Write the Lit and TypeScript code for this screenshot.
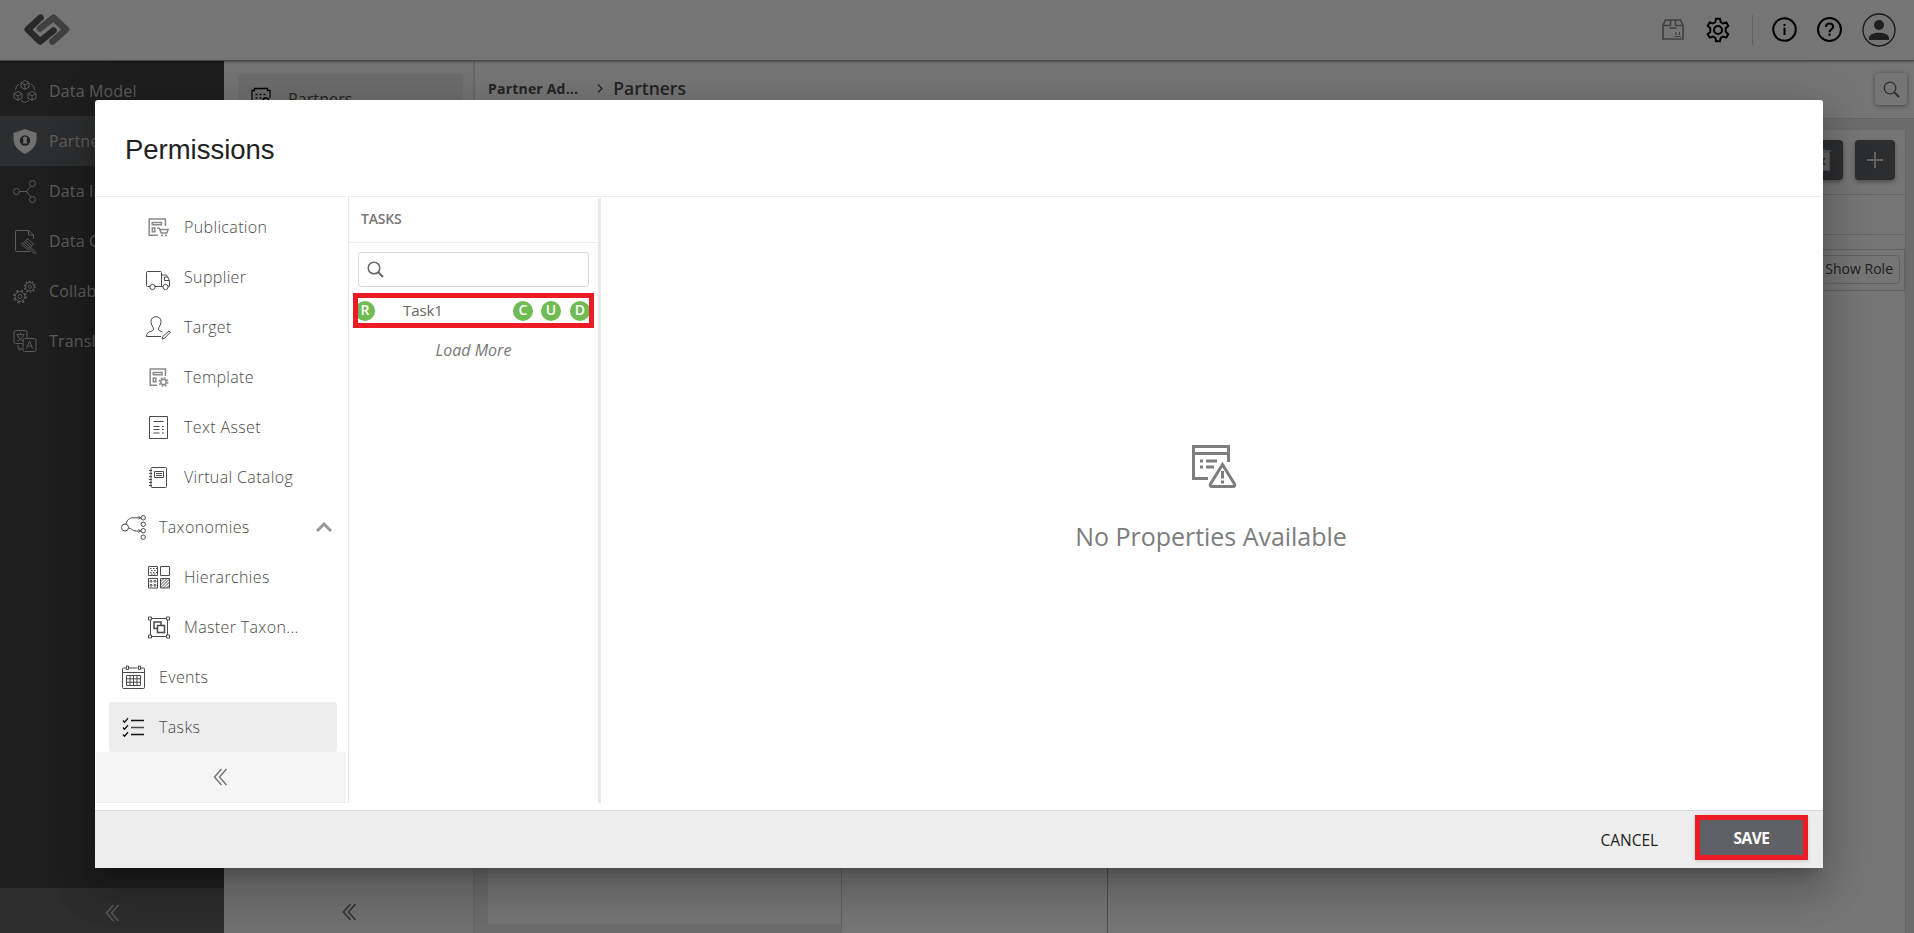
import { LitElement, html, svg, css } from "lit";
import { customElement, property } from "lit/decorators.js";
import { classMap } from "lit/directives/class-map.js";

const glyphs: Record<string, unknown> = {
  cubes: svg`<path d="M13 2.500l4 2v4.600l-4 2.200-4-2.200V4.500zM9 4.600l4 2.200 4-2.200M13 6.800v4.400M6 13.500l4 2v4.600l-4 2.200-4-2.200v-4.600zM2 15.600l4 2.200 4-2.200M6 17.800v4.400M20 13.500l4 2v4.600l-4 2.200-4-2.200v-4.600zM16 15.600l4 2.200 4-2.200M20 17.800v4.400M7 6Q3.500 8 3.500 12M19 6q3.500 2 3.500 6M9 22.500l4 2 4-2"/>`,
  shield: svg`<path class="solid" d="M13 1L24.500 5v6.500c0 6-4.500 11-11.500 14.500C6 22.500 1.500 17.500 1.500 11.500V5z"/><circle class="hole" cx="13" cy="12.500" r="5.200"/><path class="solid" d="M13 8.500a2 2 0 0 1 2 2.200l-.6 2.300 1 2.500h-4.800l1-2.500-.6-2.300a2 2 0 0 1 2-2.200z"/>`,
  network: svg`<circle cx="4.500" cy="13.500" r="3"/><circle cx="20.500" cy="5.500" r="3"/><circle cx="20.500" cy="21.500" r="3"/><path d="M7.500 13.500h7l4.300-5.500M14.500 13.500l4.300 5.500"/>`,
  gavel: svg`<path d="M21.500 11V7L17 2.500H4.500a1 1 0 0 0-1 1v19a1 1 0 0 0 1 1H18M16.500 2.500V7h5M15.500 10.500l6 5.500-1.700 1.800-6-5.500zM12.500 13.800l6 5.500M14 12.500l-2.200 2.300M19.700 17.800l-2 2.200M10.500 14.800l6.500 5.800-1.200 1.200-6.500-5.800zM18 19l6 5.500-1.200 1.500-6.500-6"/>`,
  gears: svg`<circle cx="8" cy="18.500" r="4.800"/><circle cx="8" cy="18.500" r="2"/><circle class="teeth" cx="8" cy="18.500" r="6.100"/><circle cx="17.800" cy="8.700" r="4.100"/><circle cx="17.800" cy="8.700" r="1.600"/><circle class="teeth small" cx="17.800" cy="8.700" r="5.300"/>`,
  translate: svg`<path d="M15 9.500V4a1.500 1.500 0 0 0-1.500-1.500H3.500A1.500 1.500 0 0 0 2 4v10a1.500 1.500 0 0 0 1.500 1.500H10M4.500 6.500h8M8.500 4.500v2M5.500 7c1 3 3 5 6 6M11.500 7c-1 3-3 5-6.500 6M6 17v4h3M8 19.500L9.500 21 8 22.500M12.500 10.500h10A1.500 1.500 0 0 1 24 12v10a1.500 1.500 0 0 1-1.500 1.500h-10A1.500 1.500 0 0 1 11 22V12a1.500 1.500 0 0 1 1.500-1.500zM14.500 20.500l3-7.500 3 7.500M15.500 18h4"/>`,
  publication: svg`<g class="soft"><path d="M13 21.300H4.200V5h16.200v7"/><path d="M7.300 8.500h9.200v2.200H7.300zM7.300 14h2.500v3.800H7.300zM12 14.200h2.300l1.900 4.900h5.600l1.300-3.600H15"/></g><circle class="pale" cx="17" cy="21.500" r="1.100"/><circle class="pale" cx="21" cy="21.500" r="1.100"/>`,
  truck: svg`<path d="M5 22.500H2.500a1 1 0 0 1-1-1V8.500a1 1 0 0 1 1-1h13a1 1 0 0 1 1 1v14H10M16.500 11h4c1 0 1.600.5 2 1.400l2 4.600v5.500H23M16.500 22.500H18M24.500 16.500H19.500V13h3"/><circle cx="7.500" cy="23" r="2.600"/><circle cx="20.500" cy="23" r="2.600"/>`,
  target: svg`<path d="M16 22.500H1.500c0-3 1.500-4.300 4-5 2-.6 3-1 3-2.500 0-2-2.500-3.500-2.500-7.500 0-3 2-4.800 5-4.800s5 1.800 5 4.800c0 4-2.500 5.500-2.500 7.500 0 1.500 1 2 4 3M24 17l1.500 1.200-6 6-2.500.8.800-2.500z"/>`,
  template: svg`<g class="soft"><path d="M12 21.300H5.200V5h15.300v7"/><path d="M8.300 8.500h8.700v2.200H8.300zM8.300 14h2.500v3.800H8.300z"/><circle cx="18.500" cy="18" r="2.700"/></g><circle class="teeth small faded" cx="18.500" cy="18" r="4.200"/>`,
  textasset: svg`<path d="M4.500 2.500h18v22h-18zM8.500 7.500h10M8.500 12.500h6M8.500 15.500h6M8.500 19h6M17 12.500h1.800M17 15.500h1.800M17 19h1.800" />`,
  catalog: svg`<path d="M7 3.500h13.500a1 1 0 0 1 1 1v18a1 1 0 0 1-1 1H7a1 1 0 0 1-1-1v-18a1 1 0 0 1 1-1zM9.500 7.500h9v6h-9zM11 9.500h6M11 11.500h6M4 6.500h3M4 9.500h3M4 12.500h3M4 15.500h3M4 18.500h3M4 21.500h3"/>`,
  taxonomy: svg`<circle cx="5" cy="13.500" r="3.500"/><circle cx="23.200" cy="3.800" r="2.200"/><circle cx="23.200" cy="10.300" r="2.200"/><circle cx="23.200" cy="16.700" r="2.200"/><circle cx="23.200" cy="23.200" r="2.200"/><path d="M6 10.300C7 5.500 9.500 3.800 13 3.800h7.500M8.500 14c4 .5 3 3 8 3h4M18.500 2.300l2.200 1.500-2.200 1.500M18.500 15.400l2.200 1.500-2.200 1.500"/>`,
  hierarchy: svg`<path d="M3.500 2.500h9v9h-9zM15.500 2.500h9v9h-9zM3.500 14.500h9v9.500h-9zM15.500 14.500h9v9.500h-9zM15.500 18l3.500-3.500M15.500 21l6.500-6.500M15.500 24l9-9M18.500 24l6-6M21.500 24l3-3"/><path class="dots" d="M5 4.500h7M6 6.500h6M5 8.500h7M6 10h6"/><circle cx="6" cy="17.300" r="1"/><circle cx="10" cy="17.300" r="1"/><circle cx="6" cy="21.300" r="1"/><circle cx="10" cy="21.300" r="1"/>`,
  master: svg`<path d="M5.500 4.500h17v18h-17z"/><path class="box" d="M3.500 3h3v3h-3zM21.500 3h3v3h-3zM3.500 21h3v3h-3zM21.500 21h3v3h-3z"/><path class="w15" d="M12.500 14.500H9V8h7v3.500M12.500 11.500h7v7h-7z"/>`,
  calendar: svg`<path d="M6 4H3.500a1 1 0 0 0-1 1v18.500a1 1 0 0 0 1 1h20a1 1 0 0 0 1-1V5a1 1 0 0 0-1-1H21M9 4h8.500M2.500 8.500h22M6.500 2h2v3.500h-2zM18.500 2h2v3.500h-2zM6.500 11.500h14v10h-14zM10 11.500v10M13.500 11.500v10M17 11.500v10M6.500 14.800h14M6.500 18.200h14"/>`,
  tasks: svg`<path class="ink" d="M3 6.500l1.500 1.800L8 4.300M3 13.500l1.500 1.800L8 11.300M3 20.500l1.500 1.800L8 18.300M11 6.500h13M11 20.500h13"/><path class="w15" d="M11 13.500h13"/>`,
  building: svg`<path class="ink" d="M3 26V4.500h2.500v-2h13v2H21V12"/><path class="ink dots" d="M6.500 8.500h11.500M6.500 12h11.500M6.500 15.500h8"/><circle class="ink" cx="17" cy="15" r="3"/>`,
};

@customElement("ui-glyph")
class UiGlyph extends LitElement {
  @property() name = "";
  static styles = css`
    :host { display: block; width: 26px; height: 26px; flex: none; }
    svg { display: block; width: 26px; height: 26px; fill: none; stroke: currentColor; stroke-width: 1; overflow: visible; }
    .solid { fill: currentColor; stroke: none; }
    .hole { fill: #47484a; stroke: none; }
    .teeth { stroke-width: 1.600; stroke-dasharray: 2.400 2.390; }
    .teeth.small { stroke-width: 1.500; stroke-dasharray: 1.700 1.600; }
    .w15 { stroke-width: 1.500; }
    .soft { stroke: #8a8a8a; stroke-width: 1.500; }
    .faded { stroke: #8a8a8a; }
    .pale { fill: #8a8a8a; stroke: none; }
    .dots { stroke-dasharray: 1.500 1.500; }
    .box { fill: #fff; }
    .ink { stroke: #111; stroke-width: 1.300; }
    .dots.ink { stroke-dasharray: 2 2; }
  `;
  render() {
    return html`<svg viewBox="0 0 26 26">${glyphs[this.name]}</svg>`;
  }
}

const chevrons = html`<svg class="chevrons" viewBox="0 0 15 18"><path d="M8.500 1L1.500 9l7 8M13.500 1l-7 8 7 8" /></svg>`;
const lens = html`<svg class="lens" viewBox="0 0 17 17"><circle cx="7" cy="7" r="5.800" /><path class="handle" d="M11.300 11.300l4.700 4.700" /></svg>`;

@customElement("app-root")
class AppRoot extends LitElement {
  static styles = css`
    :host { display: block; width: 1914px; height: 933px; overflow: hidden; position: relative; font-family: "Open Sans", "Noto Sans", sans-serif; color: #444; background: #fff; }
    * { box-sizing: border-box; }
    svg { display: block; fill: none; stroke: currentColor; flex: none; }
    .page { display: flex; flex-direction: column; height: 933px; }
    .topbar { height: 61px; flex: none; border-bottom: 1px solid #a0a0a0; box-shadow: 0 1px 2px rgba(0,0,0,.35); display: flex; align-items: center; padding: 0 18px 1px 24px; z-index: 1; color: #000; }
    .logo { width: 46px; height: 32px; margin-right: auto; stroke-linejoin: round; stroke-linecap: round; stroke-width: 6.600; }
    .logo .a { stroke: #595959; } .logo .b { stroke: #8a8a8a; }
    .package { width: 22px; height: 21px; stroke: #8a8a8a; stroke-width: 1.700; }
    .gear { width: 26px; height: 26px; stroke-width: 2; margin-left: 21px; }
    .rule { width: 1px; height: 30px; background: #cfcfcf; margin: 0 19px 0 21px; }
    .round { width: 25px; height: 25px; stroke-width: 2; margin-right: 20px; }
    .avatar { width: 34px; height: 34px; stroke: #333; stroke-width: 1.300; }
    .avatar .fill { fill: #444; stroke: none; }
    .body { display: flex; flex: 1; min-height: 0; }
    .menu { width: 224px; background: #434343; color: #c4c4c4; display: flex; flex-direction: column; padding-top: 5px; }
    .menu-item { height: 50px; display: flex; align-items: center; padding-left: 12px; gap: 11px; font-size: 16px; letter-spacing: .15px; white-space: nowrap; }
    .menu-item.on { background: #636466; color: #cacaca; }
    .menu-item.on ui-glyph { color: #f5f5f5; }
    .fold { margin-top: auto; display: flex; align-items: center; justify-content: center; }
    .menu .fold { height: 45px; background: #636363; color: #bcbcbc; padding-top: 4px; }
    .chevrons { width: 15px; height: 18px; stroke-width: 1.500; }
    .sub { width: 249px; background: #fbfbfb; display: flex; flex-direction: column; padding: 13px 0 0; }
    .sub-item { margin: 0 10px 0 14px; height: 50px; border-radius: 3px; background: #ebebeb; display: flex; align-items: center; padding-left: 11px; gap: 13px; font-size: 16px; letter-spacing: .1px; color: #4d4d4d; }
    .sub .fold { height: 45px; background: #f5f5f5; color: #666; padding: 3px 0 0 1px; }
    .main { flex: 1; background: #ebebeb; border-left: 2px solid #e2e2e2; display: flex; flex-direction: column; min-width: 0; }
    .crumbs { height: 58px; flex: none; background: #fefefe; border-bottom: 1px solid #dcdcdc; display: flex; align-items: center; padding: 0 7px 3px 13px; color: #4f5054; font-weight: 700; font-size: 14px; letter-spacing: .2px; }
    .crumb-next { width: 6px; height: 9px; stroke-width: 1.300; margin: 0 10px 0 19px; }
    .current { font-size: 17.500px; letter-spacing: 0; margin-right: auto; font-weight: 600; }
    .find { width: 32px; height: 32px; border-radius: 3px; box-shadow: 0 1px 4px rgba(0,0,0,.4); display: flex; align-items: center; justify-content: center; color: #666; margin-top: 2px; }
    .lens { width: 17px; height: 17px; stroke-width: 1.300; }
    .lens .handle { stroke-width: 2; }
    .sheet { margin: 11px 8px 0 13px; flex: 1; background: #fff; display: flex; flex-direction: column; min-height: 0; border-right: 1px solid #dedede; }
    .actions { height: 65px; border-bottom: 1px solid #dcdcdc; display: flex; justify-content: flex-end; gap: 12px; padding: 10px 10px 0 0; }
    .action { width: 40px; height: 40px; border-radius: 4px; background: #606266; color: #d8d8d8; display: flex; align-items: center; justify-content: center; box-shadow: 0 2px 4px rgba(0,0,0,.35); }
    .action svg { width: 16px; height: 16px; stroke-width: 2; }
    .action .bin { width: 18px; height: 22px; stroke-width: 1.500; margin-left: -2px; }
    .action .bin .lid { fill: currentColor; }
    .action .bin .cross { stroke: #606266; }
    .band { height: 40px; border-bottom: 1px solid #dcdcdc; }
    .filter { margin-top: 14px; height: 42px; border: 1px solid #d6d6d6; display: flex; justify-content: flex-end; align-items: center; padding: 0 4px 1px 0; }
    .chip { height: 29px; border: 1px solid #d6d6d6; border-radius: 4px; padding: 0 6px; font-size: 14px; line-height: 26px; color: #444; }
    .grid { flex: 1; display: flex; }
    .tree { width: 354px; border-right: 1px solid #cfcfcf; border-bottom: 9px solid #ebebeb; }
    .mid { width: 266px; border-right: 1px solid #aaa; }
    .veil { position: absolute; inset: 0; background: rgba(0,0,0,.54); display: flex; z-index: 2; }
    .dialog { margin: 100px 0 0 95px; width: 1728px; height: 768px; background: #fff; border-radius: 3px 3px 0 0; display: flex; flex-direction: column; box-shadow: 0 11px 15px -7px rgba(0,0,0,.2), 0 24px 38px 3px rgba(0,0,0,.14), 0 9px 46px 8px rgba(0,0,0,.12); }
    .title { height: 96px; margin: 0; padding: 33px 0 0 30px; font: 400 27.500px/34px "Liberation Sans", Arial, sans-serif; letter-spacing: -.02px; color: #222; }
    .panes { flex: 1; display: flex; padding: 0 2px 7px 1px; min-height: 0; }
    .nav { width: 250px; margin-right: 2px; border-top: 1px solid #ebebeb; border-bottom: 1px solid #ebebeb; display: flex; flex-direction: column; justify-content: flex-end; }
    .nav-item { height: 50px; margin: 0 9px 0 13px; border-radius: 3px; display: flex; align-items: center; padding-left: 11px; gap: 13px; font-size: 16px; letter-spacing: .36px; font-weight: 300; color: #4a4a4a; white-space: nowrap; }
    .nav-item.child { padding-left: 36px; }
    .nav-item.on { background: #ededed; }
    .up { width: 16px; height: 10px; stroke: #999; stroke-width: 3; margin: 0 5px 0 auto; }
    .nav .fold { height: 50px; margin: 0; background: #f5f5f5; color: #777; padding-right: 1px; }
    .list { width: 250px; border-left: 1px solid #e6e6e6; border-top: 1px solid #ebebeb; display: flex; flex-direction: column; }
    .list-head { height: 46px; border-bottom: 1px solid #ebebeb; padding-left: 12px; font-size: 14px; letter-spacing: -.2px; line-height: 44px; color: #777; font-weight: 600; }
    .search { margin: 9px 9px 0; height: 35px; border: 1px solid #d9d9d9; border-radius: 3px; display: flex; align-items: center; padding-left: 8px; color: #666; }
    .search .lens { stroke-width: 1.500; }
    .hit { margin: 6px 4px 0; height: 35px; border: 5px solid #ed1c24; display: flex; align-items: center; overflow: hidden; font-size: 14px; color: #666; }
    .name { margin: 0 auto 0 28px; padding-bottom: 2px; font-size: 15px; letter-spacing: -.1px; }
    .badge { width: 20px; height: 20px; flex: none; border-radius: 50%; background: #70bb53; color: #fff; font-size: 14px; font-weight: 600; line-height: 18px; text-align: center; margin-left: 8px; }
    .badge.first { margin-left: -3px; }
    .badge.last { margin: 0 -1px 0 9px; }
    .more { margin-top: 11px; text-align: center; font-size: 16px; line-height: 22px; font-style: italic; color: #777; }
    .detail { flex: 1; border-top: 1px solid #ebebeb; display: flex; }
    .split { width: 3px; background: #e9e9e9; margin-top: 1px; }
    .empty { flex: 1; display: flex; flex-direction: column; align-items: center; padding-top: 247px; font-size: 25px; letter-spacing: -.03px; color: #7d7d7d; }
    .empty svg { width: 46px; height: 46px; stroke-width: 3; margin: 0 0 30px 6px; }
    .empty span { line-height: 32px; }
    .foot { height: 58px; background: #ededed; border-top: 1px solid #d9d9d9; display: flex; justify-content: flex-end; padding: 4px 15px 0 0; color: #222; font-size: 15px; }
    .cancel { font-size: 15.500px; line-height: 51px; margin-right: 37px; letter-spacing: -.05px; }
    .save { width: 113px; height: 45px; border: 5px solid #ed1c24; background: #5f6166; color: #fff; font-weight: 700; font-size: 15.500px; letter-spacing: -.5px; text-align: center; line-height: 37px; box-shadow: 0 1px 4px rgba(0,0,0,.15); }
  `;

  menu: [string, string, boolean?][] = [
    ["cubes", "Data Model"], ["shield", "Partner Admin", true], ["network", "Data Integration"],
    ["gavel", "Data Governance"], ["gears", "Collaboration"], ["translate", "Translations"],
  ];
  nav: [string, string, string?][] = [
    ["publication", "Publication", "child"], ["truck", "Supplier", "child"], ["target", "Target", "child"],
    ["template", "Template", "child"], ["textasset", "Text Asset", "child"], ["catalog", "Virtual Catalog", "child"],
    ["taxonomy", "Taxonomies", "open"], ["hierarchy", "Hierarchies", "child"], ["master", "Master Taxon...", "child"],
    ["calendar", "Events"], ["tasks", "Tasks", "on"],
  ];

  render() {
    return html`
      <div class="page">
        <header class="topbar">
          <svg class="logo" viewBox="0 0 46 32"><path class="b" d="M28.500 27.500l13.500-12L29.500 3.800 16 14.500"/><path class="a" d="M16.500 3.700L3.800 15.500 16 27.300l13.500-10.800"/></svg>
          <svg class="package" viewBox="0 0 22 21"><path d="M1 6.500V20h20V6.500L18.500 1h-15zM1 6.500h7.500M13.500 6.500H21M8.500 1v5.500M13.500 1v5.500M7.500 9h7"/><path d="M14 13v3M17.500 13v3M12.500 17.500h6.500" stroke-width="1.200"/></svg>
          <svg class="gear" viewBox="0 0 26 26"><circle cx="13" cy="13" r="4"/><path d="M11 1.800h4l.7 3.400 2.300 1.300 3.300-1.100 2 3.400-2.600 2.400v3.600l2.600 2.400-2 3.400-3.300-1.100-2.300 1.300-.7 3.400h-4l-.7-3.400L8 19.500l-3.300 1.100-2-3.400 2.600-2.400v-3.600L2.700 8.800l2-3.400L8 6.500l2.300-1.300z"/></svg>
          <span class="rule"></span>
          <svg class="round" viewBox="0 0 25 25"><circle cx="12.500" cy="12.500" r="11.300"/><path d="M12.500 10.500V18M12.500 7v2"/></svg>
          <svg class="round" viewBox="0 0 25 25"><circle cx="12.500" cy="12.500" r="11.500"/><path d="M9 10c0-4.600 7-4.600 7 0 0 2.300-3.500 2.500-3.500 5.300M12.500 16.500v2.200"/></svg>
          <svg class="avatar" viewBox="0 0 34 34"><circle cx="17" cy="17" r="16"/><circle class="fill" cx="17" cy="12" r="5"/><path class="fill" d="M7 27v-2c0-7 20-7 20 0v2z"/></svg>
        </header>
        <div class="body">
          <nav class="menu">
            ${this.menu.map(([g, t, on]) => html`<div class=${classMap({ "menu-item": true, on: !!on })}><ui-glyph name=${g}></ui-glyph><span>${t}</span></div>`)}
            <div class="fold">${chevrons}</div>
          </nav>
          <aside class="sub">
            <div class="sub-item"><ui-glyph name="building"></ui-glyph><span>Partners</span></div>
            <div class="fold">${chevrons}</div>
          </aside>
          <main class="main">
            <div class="crumbs">
              <span>Partner Ad...</span>
              <svg class="crumb-next" viewBox="0 0 6 9"><path d="M1 .5l4 4-4 4"/></svg>
              <span class="current">Partners</span>
              <span class="find">${lens}</span>
            </div>
            <section class="sheet">
              <div class="actions">
                <span class="action"><svg class="bin" viewBox="0 0 18 22"><path class="lid" d="M2 4h14v17H2zM0 2h18M6 0h6"/><path class="cross" d="M6 9l6 7M12 9l-6 7"/></svg></span>
                <span class="action"><svg viewBox="0 0 16 16"><path d="M8 0v16M0 8h16"/></svg></span>
              </div>
              <div class="band"></div>
              <div class="filter"><span class="chip">Show Role</span></div>
              <div class="grid"><div class="tree"></div><div class="mid"></div></div>
            </section>
          </main>
        </div>
      </div>
      <div class="veil">
        <section class="dialog">
          <h1 class="title">Permissions</h1>
          <div class="panes">
            <nav class="nav">
              ${this.nav.map(([g, t, k]) => html`<div class=${classMap({ "nav-item": true, child: k === "child", on: k === "on" })}>
                <ui-glyph name=${g}></ui-glyph><span>${t}</span>
                ${k === "open" ? html`<svg class="up" viewBox="0 0 16 10"><path d="M1 9l7-7 7 7"/></svg>` : ""}</div>`)}
              <div class="fold">${chevrons}</div>
            </nav>
            <section class="list">
              <div class="list-head">TASKS</div>
              <div class="search">${lens}</div>
              <div class="hit"><span class="badge first">R</span><span class="name">Task1</span><span class="badge">C</span><span class="badge">U</span><span class="badge last">D</span></div>
              <div class="more">Load More</div>
            </section>
            <section class="detail">
              <div class="split"></div>
              <div class="empty">
                <svg viewBox="0 0 46 46"><path d="M17 34.500H2.500V2.500h35V18M2.500 9.500h35M9 17h3M9 23h3M15 17h11M15 23h8"/><path d="M31.500 20.500L19.500 40c-.8 1.500 0 2.500 1.500 2.500h21c1.500 0 2.300-1 1.500-2.500zM31.500 27v7.500M31.500 36.500v3"/></svg>
                <span>No Properties Available</span>
              </div>
            </section>
          </div>
          <footer class="foot"><span class="cancel">CANCEL</span><span class="save">SAVE</span></footer>
        </section>
      </div>`;
  }
}
